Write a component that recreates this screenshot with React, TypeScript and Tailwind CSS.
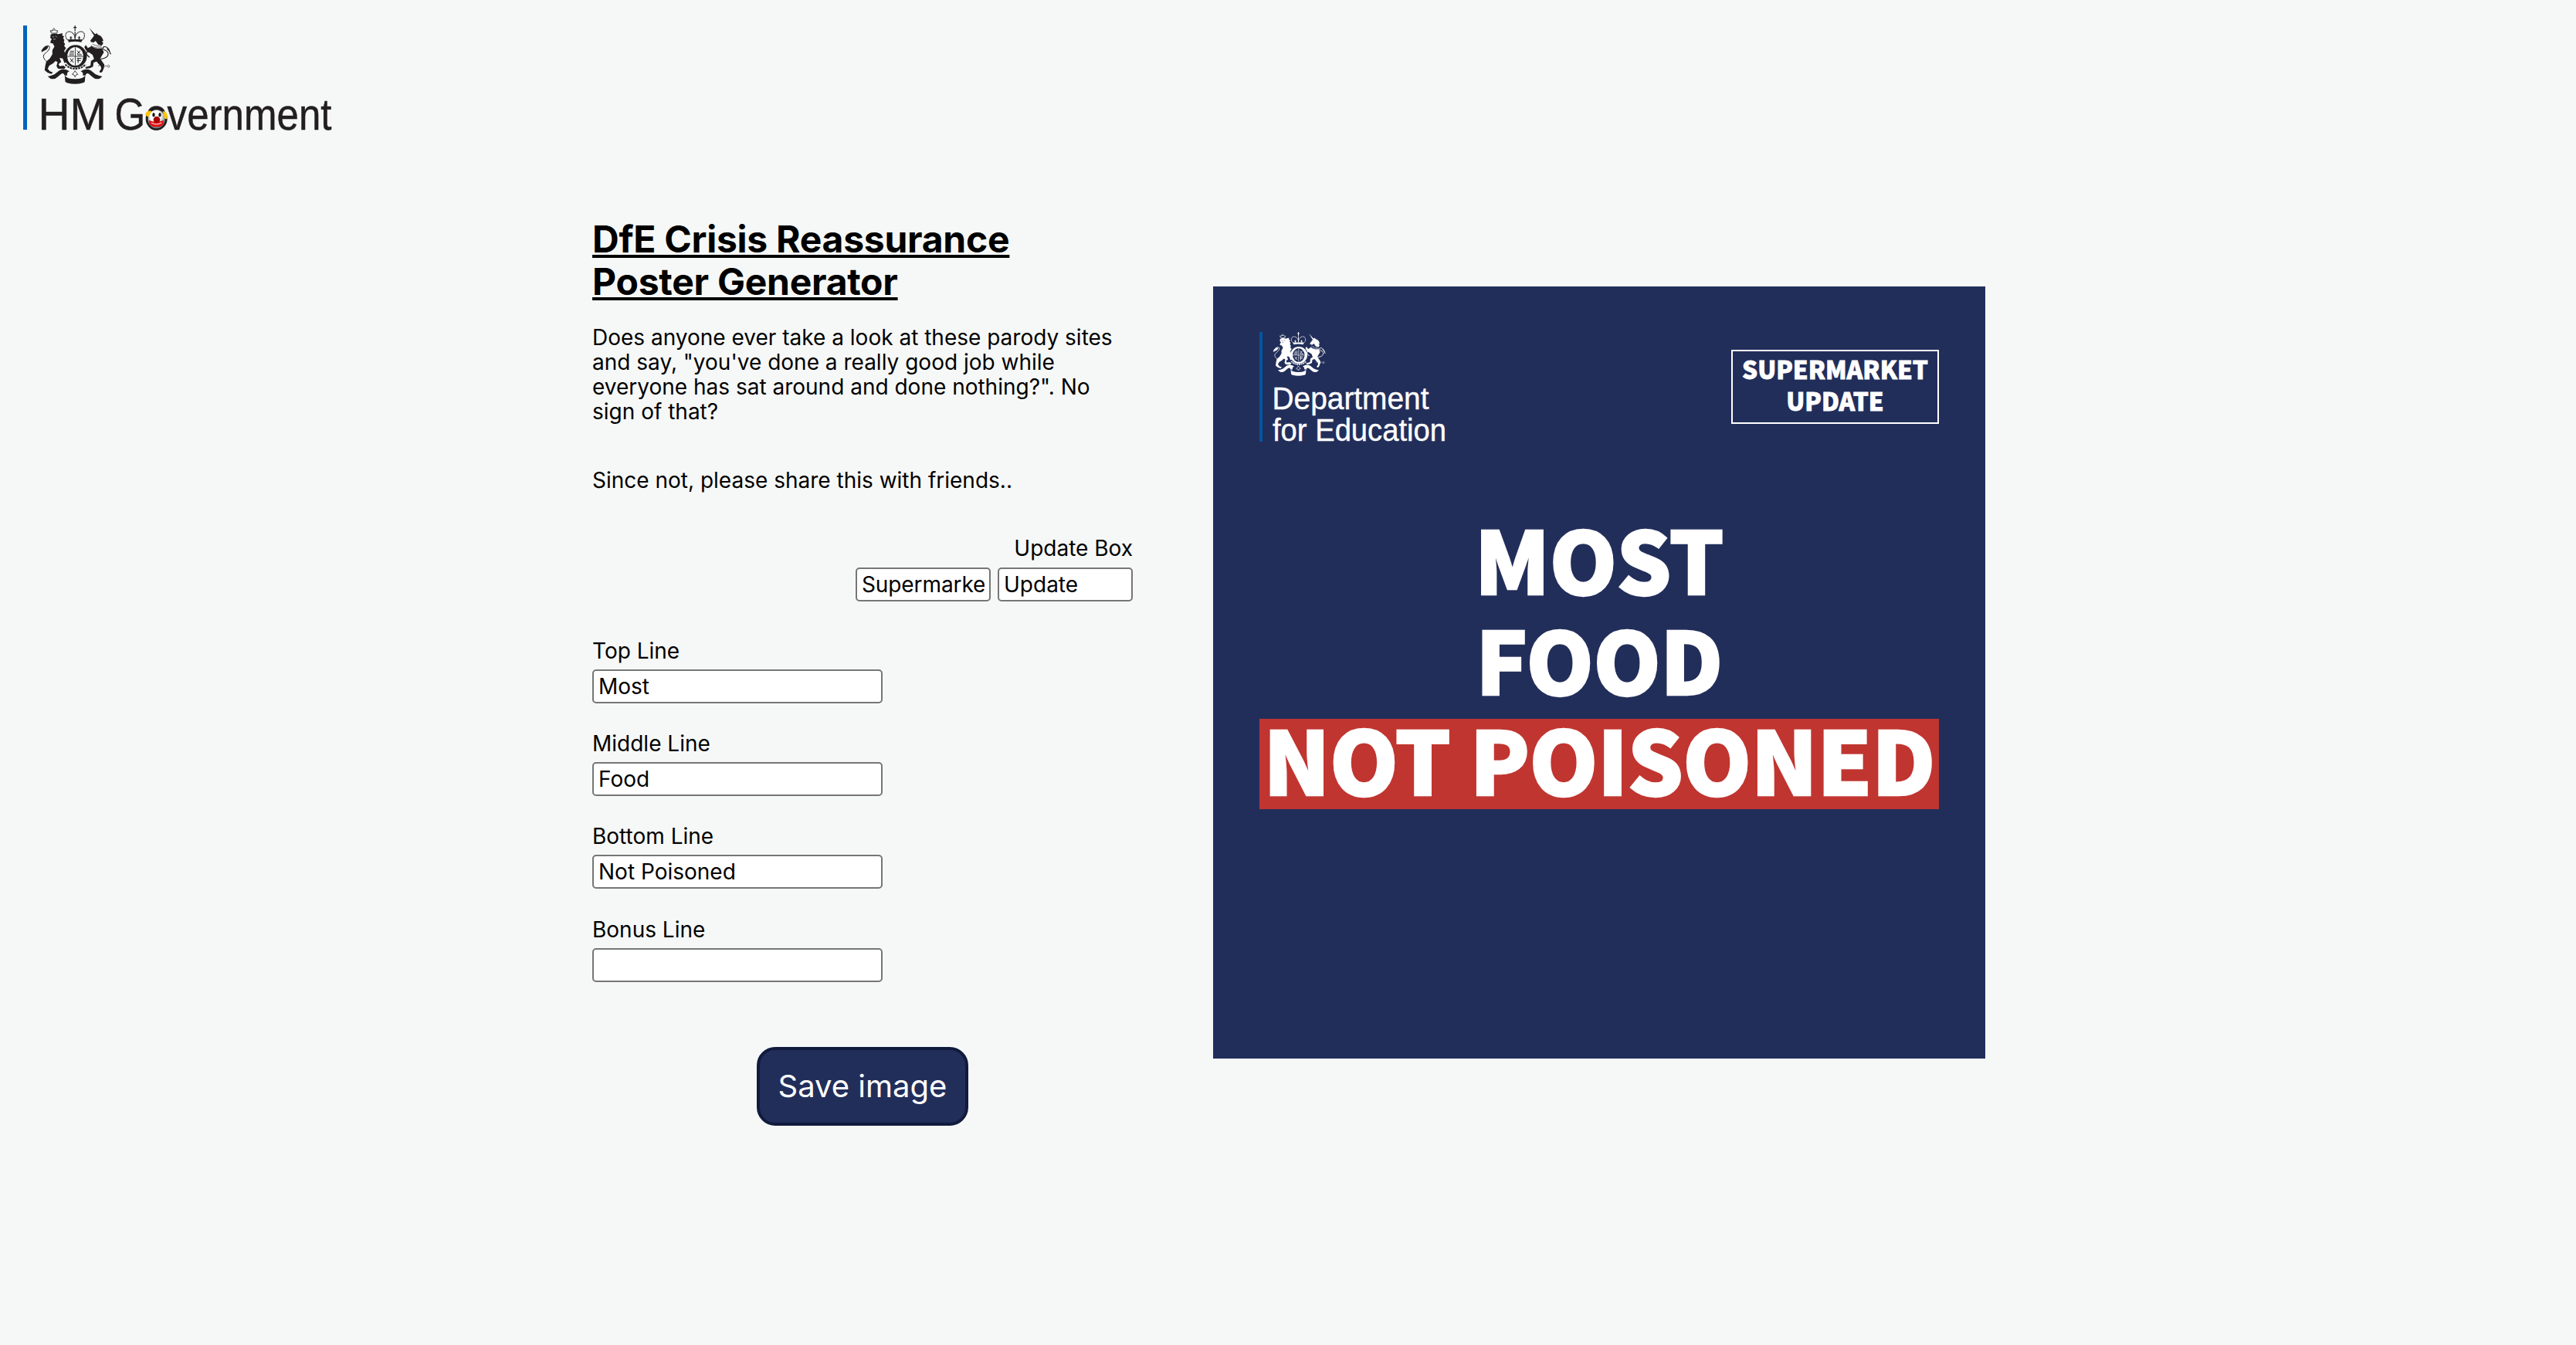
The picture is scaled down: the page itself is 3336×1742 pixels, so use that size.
function Crest({ ground }: { ground: string }) {
  return (
    <svg viewBox="40 38 272 228" className="block h-full w-full fill-current" aria-hidden="true">
      {/* lion */}
      <path d="M80 68 L76 58 L83 60 L84 54 L90 57 L95 54 L98 59 L104 58 L102 68 Z" fill="none" stroke="currentColor" strokeWidth="2.5" />
      <circle cx="90" cy="50" r="2.5" />
      <path d="M77 74 C84 69 98 68 106 72 L124 68 L122 76 L129 80 L126 88 L131 94 L128 102 L133 110 L130 118 L137 126 L130 136 L134 150 L132 166 L140 178 L131 184 L124 166 L112 164 L118 180 L108 188 L112 196 L126 194 L136 200 L130 207 L106 206 L100 196 L104 180 L96 176 L88 184 L72 194 L66 206 L74 216 L86 220 L80 226 L66 222 L54 212 L56 196 L60 178 L74 166 L84 150 L84 134 L92 120 L86 108 L76 106 L78 96 L82 92 L76 86 Z" />
      <path d="M84 80 L90 84 M96 78 L102 84 M88 92 L96 90" fill="none" className={ground} strokeWidth="2" />
      <path d="M62 178 C52 170 44 158 54 148 C66 138 76 130 72 119 C68 113 50 118 42 138" fill="none" stroke="currentColor" strokeWidth="3" />
      <path d="M42 142 C46 122 58 116 68 120 C66 130 58 134 52 136 Z" />
      {/* shield and garter */}
      <circle cx="174" cy="158" r="44" />
      <ellipse cx="173" cy="158" rx="31" ry="36" className={ground} strokeWidth="0" />
      <path d="M173 123 V193 M142 158 H204" stroke="currentColor" strokeWidth="2.5" />
      <path d="M153 138 H168 M151 145 H168 M149 152 H168 M180 136 L192 148 M192 136 L180 150 M181 152 H198 M153 166 L166 182 M166 166 L154 180 M179 166 H197 M179 174 H194 M184 164 V184" stroke="currentColor" strokeWidth="3" fill="none" />
      {/* crown */}
      <path d="M146 96 C128 84 134 58 153 62 C162 64 168 72 172 84 C176 72 182 64 191 62 C210 58 216 84 198 96" fill="none" stroke="currentColor" strokeWidth="3.5" strokeDasharray="4 1.5" />
      <path d="M145 92 L199 92 L197 103 Q172 97 147 103 Z" />
      <path d="M172 38 V60 M166 46 H178 M172 62 V92 M156 80 V92 M188 80 V92 M151 86 H161 M183 86 H193" stroke="currentColor" strokeWidth="3.5" />
      {/* unicorn */}
      <path d="M227 47 L252 74 L246 78 Z" />
      <path d="M250 72 L258 68 L260 74 C272 76 280 86 282 98 L276 100 L282 106 L276 116 L262 112 L252 98 L244 104 L233 102 L232 96 L240 86 Z" />
      <path d="M240 110 Q256 120 276 118 M234 116 Q252 128 276 124" fill="none" stroke="currentColor" strokeWidth="3" strokeDasharray="4 2" />
      <path d="M236 118 C250 128 264 130 277 126 L284 142 L276 156 L270 166 L278 178 L286 190 L284 204 L278 218 L272 222 L266 218 L274 206 L272 196 L262 186 L256 178 L244 182 L242 198 L230 204 L214 206 L212 200 L232 194 L234 176 L246 168 L240 152 L228 144 L214 134 L208 122 L214 114 L222 126 Z" />
      <path d="M234 140 L218 140 L216 150 L228 162" fill="none" stroke="currentColor" strokeWidth="4" />
      <path d="M272 168 C286 168 304 160 300 144 C296 132 280 136 280 126 C282 116 302 118 308 144 M296 128 C308 136 308 146 311 150" fill="none" stroke="currentColor" strokeWidth="3.5" />
      <path d="M262 196 q6 -8 12 0 q6 8 12 2 q6 -8 12 0 q8 6 8 -2 q-2 -8 -8 -2" fill="none" stroke="currentColor" strokeWidth="2" />
      {/* garter buckle and ribbon */}
      <path d="M134 190 L150 202 L172 207 L196 202 L214 190" fill="none" stroke="currentColor" strokeWidth="6" strokeDasharray="8 3" />
      <path d="M172 214 L177 221 L183 228 L176 230 L172 238 L168 230 L161 228 L167 221 Z" fill="none" stroke="currentColor" strokeWidth="2.5" />
      <path d="M66 236 Q78 234 92 228 L112 212 Q124 206 138 210 L150 216 Q138 222 142 232 L132 232 Q128 220 118 226 L104 238 Q92 250 76 244 Z" />
      <path d="M278 236 Q266 234 252 228 L232 212 Q220 206 206 210 L194 216 Q206 222 202 232 L212 232 Q216 220 226 226 L240 238 Q252 250 268 244 Z" />
      <path d="M132 230 L134 256 Q140 264 172 265 Q204 264 210 256 L212 230 Q208 246 172 246 Q136 246 132 230 Z" />
    </svg>
  );
}

function Clown() {
  return (
    <svg viewBox="0 0 90 90" className="block h-full w-full" aria-hidden="true">
      <defs>
        <radialGradient id="face" cx="0.45" cy="0.35" r="0.6">
          <stop offset="0.5" stopColor="#ffffff" />
          <stop offset="1" stopColor="#777777" />
        </radialGradient>
      </defs>
      <ellipse cx="44" cy="45" rx="42" ry="43" fill="#231f20" />
      <ellipse cx="44" cy="46" rx="33" ry="36" fill="url(#face)" />
      <path d="M0 28 Q4 12 24 14 L20 26 Q14 30 14 38 Q4 36 0 28 Z" fill="#fdc70c" />
      <path d="M68 16 Q84 14 86 32 L90 38 Q86 48 76 44 Z" fill="#fdc70c" />
      <ellipse cx="33" cy="29" rx="5" ry="8" fill="#111" />
      <ellipse cx="57" cy="29" rx="5" ry="8" fill="#111" />
      <path d="M14 50 Q44 62 72 50 Q74 76 44 76 Q14 76 14 50 Z" fill="#e01010" />
      <path d="M24 60 Q44 72 64 60" fill="none" stroke="#fff" strokeWidth="3" />
      <circle cx="45" cy="48" r="13" fill="#a80000" />
    </svg>
  );
}

function HMLogo() {
  return (
    <header className="flex h-[135px] w-[400px] border-l-[5px] border-[#0063be]">
      <div className="relative flex flex-col pl-[18px] text-[#231f20]">
        <div className="h-[76px] w-[91px]">
          <Crest ground="fill-[#f6f8f7] stroke-[#f6f8f7]" />
        </div>
        <svg viewBox="0 0 380 59" className="h-[59px] w-[380px] overflow-visible" role="img">
          <g fontSize="57" fontFamily="Liberation Sans, sans-serif" fill="#231f20" stroke="#231f20" strokeWidth="0.5">
            <text x="-3.5" y="59" textLength="88.5" lengthAdjust="spacingAndGlyphs">HM</text>
            <text x="95.5" y="59" textLength="281" lengthAdjust="spacingAndGlyphs">Government</text>
          </g>
        </svg>
        <div className="absolute left-[153px] top-[106px] h-[30px] w-[30px]">
          <Clown />
        </div>
      </div>
    </header>
  );
}

function DepartmentLogo() {
  return (
    <div className="flex h-[142px] border-l-4 border-[#0056a0] pl-[13px] font-normal normal-case [-webkit-text-stroke:0]">
      <div className="flex flex-col">
        <div className="h-[57px] w-[69px]">
          <Crest ground="fill-[#222e5a] stroke-[#222e5a]" />
        </div>
        <svg viewBox="0 0 226 85" className="h-[85px] w-[226px] overflow-visible" role="img">
          <g fontSize="40.5" fontFamily="Liberation Sans, sans-serif" fill="#fff" stroke="#fff" strokeWidth="0.4">
            <text x="-0.5" y="42.5" textLength="203" lengthAdjust="spacingAndGlyphs">Department</text>
            <text x="0" y="84" textLength="225" lengthAdjust="spacingAndGlyphs">for Education</text>
          </g>
        </svg>
      </div>
    </div>
  );
}

const box = 'block h-11 rounded-[5px] border-2 border-[#767676] bg-white px-1.5 text-[28px] leading-8 text-black outline-none';

function Field({ label, value }: { label: string; value: string }) {
  return (
    <label className="mb-[32.4px] block">
      <span className="mb-1 block h-10 leading-10">{label}</span>
      <input className={`${box} w-[376px]`} defaultValue={value} />
    </label>
  );
}

export default function App() {
  return (
    <div className="h-[1742px] w-[3336px] overflow-hidden bg-[#f6f8f7] pl-[30px] pt-[33px] font-['Inter',sans-serif] text-[28px] text-black">
      <HMLogo />
      <main className="ml-[737px] mt-[114px] flex items-start">
        <section className="w-[700px]">
          <h1 className="w-[600px] text-[48px] font-bold leading-[55px] tracking-[-0.25px] underline">DfE Crisis Reassurance Poster Generator</h1>
          <p className="mt-[28.5px] leading-[32.33px]">
            Does anyone ever take a look at these parody sites and say, "you've done a really good job while everyone has sat around and done nothing?". No sign of that?
          </p>
          <p className="mt-[56px] leading-8">Since not, please share this with friends..</p>
          <div className="mt-[51.7px] flex flex-col items-end">
            <span className="mb-[5px] h-10 leading-10">Update Box</span>
            <div className="flex gap-[9px]">
              <input className={`${box} w-[175px] tracking-[-0.1px]`} defaultValue="Supermarke" />
              <input className={`${box} w-[175px]`} defaultValue="Update" />
            </div>
          </div>
          <div className="mt-11">
            <Field label="Top Line" value="Most" />
            <Field label="Middle Line" value="Food" />
            <Field label="Bottom Line" value="Not Poisoned" />
            <Field label="Bonus Line" value="" />
          </div>
          <button className="ml-[213px] mt-[84px] flex h-[102px] w-[274px] items-center justify-center rounded-[24px] border-4 border-[#111b3d] bg-[#222e5a] text-[40px] text-white">Save image</button>
        </section>
        <section className="ml-[104px] mt-[89px] h-[1000px] w-[1000px] bg-[#222e5a] px-[60px] pt-[59px] font-['Noto_Sans_CJK_JP',sans-serif] font-black uppercase text-white">
          <div className="flex items-start justify-between">
            <DepartmentLogo />
            <div className="mt-[23px] flex h-24 w-[269px] flex-col items-center border-2 border-white pt-[2px] text-[31.5px] leading-[41px] [-webkit-text-stroke:0.8px_white]">
              <span>Supermarket</span>
              <span>Update</span>
            </div>
          </div>
          <div className="mt-[85px] flex flex-col items-center text-[111px] leading-[130px] tracking-[-0.4px] [-webkit-text-stroke:2.5px_white]">
            <span>Most</span>
            <span>Food</span>
            <span className="mt-[14px] flex h-[117px] w-[880px] items-center justify-center whitespace-nowrap bg-[#c03530] pb-[18px] text-[113px] tracking-[-0.6px]">Not Poisoned</span>
          </div>
        </section>
      </main>
    </div>
  );
}
